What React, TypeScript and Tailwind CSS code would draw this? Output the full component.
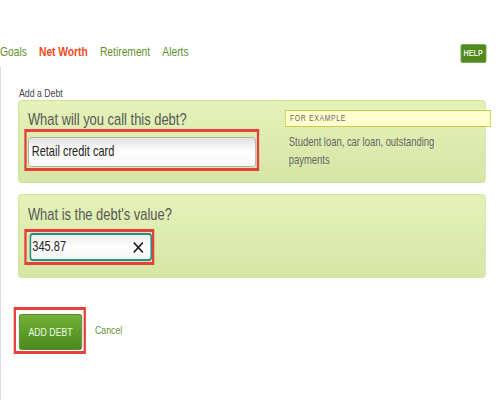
import React from 'react';

const navItems = [
  { label: 'Goals', active: false },
  { label: 'Net Worth', active: true },
  { label: 'Retirement', active: false },
  { label: 'Alerts', active: false },
];

export default function App() {
  return (
    <div className="w-[500px] h-[400px] overflow-hidden bg-white">
      {/* the page is drawn wide and squeezed horizontally, like the capture */}
      <div className="w-[658px] h-[400px] origin-top-left scale-x-[0.76] font-['Liberation_Sans',Arial,sans-serif] flex flex-col">
        {/* top nav */}
        <div className="flex items-start justify-between pt-[44px] pr-[18.5px]">
          <nav className="flex gap-4 text-[13.5px] leading-[16px]">
            {navItems.map((item) => (
              <span
                key={item.label}
                className={item.active ? 'font-bold text-[#f24a1c]' : 'text-[#5f8f2b]'}
              >
                {item.label}
              </span>
            ))}
          </nav>
          <div className="w-[34px] h-[19px] flex items-center justify-center rounded-[2px] bg-[#4e8a1d] border border-[#7aaa4a] text-[9.5px] font-bold text-[#e9f2dc]">
            HELP
          </div>
        </div>

        {/* content */}
        <div className="mt-[4px] flex-1 border-l border-[#cfcfcf] pl-[16.5px] pt-[19px]">
          <div className="pl-[7.5px] text-[11.5px] leading-[14px] text-[#444]">Add a Debt</div>

          {/* debt name */}
          <div className="ml-[6.2px] w-[615.8px] flex rounded-[4px] border border-[#c6df88] bg-linear-to-b from-[#e4f2b8] to-[#d6e6a5] pl-[7px] pt-[9px] pb-[11px]">
            <div className="w-[343.3px] shrink-0">
              <div className="pl-[5px] text-[17px] leading-[19px] text-[#585858]">What will you call this debt?</div>
              <div className="w-[309px] border-[3px] border-[#e6403d] pl-[2px] pr-px pt-[5.4px] pb-px">
                <div className="h-[29.3px] flex items-center rounded-[5px] border border-[#a9a9a9] bg-linear-to-b from-[#e2e2e2] via-white to-[#f7f7f7] pl-[4px] text-[14.5px] text-[#222]">
                  Retail credit card
                </div>
              </div>
            </div>
            <div className="w-[271px] shrink-0">
              <div className="h-[17px] flex items-center border border-[#c9c94c] bg-[#ffffce] pl-[5.5px] text-[9px] tracking-[0.9px] text-[#666]">
                FOR EXAMPLE
              </div>
              <p className="mt-[5.5px] pl-[5px] w-[235px] text-[12.4px] leading-[18px] text-[#656565]">
                Student loan, car loan, outstanding payments
              </p>
            </div>
          </div>

          {/* debt value */}
          <div className="ml-[6.2px] mt-[11.7px] w-[615.8px] rounded-[4px] border border-[#c6df88] bg-linear-to-b from-[#e4f2b8] to-[#d6e6a5] pl-[7px] pt-[10px] pb-[11.3px]">
            <div className="pl-[5px] text-[17px] leading-[19px] text-[#585858]">What is the debt's value?</div>
            <div className="mt-[4.2px] w-[171.4px] border-[3px] border-[#e6403d] pl-[3.9px] pt-[1.7px] pb-px">
              <div className="w-[161px] h-[28px] flex items-center justify-between rounded-[4px] border-2 border-[#2b8a8a] bg-linear-to-b from-[#ececec] via-white to-[#f5f5f5] pl-[2px] pr-[9px] text-[14.5px] text-[#222]">
                <span>345.87</span>
                <svg width="14" height="11" viewBox="0 0 14 11" fill="none" stroke="#1e1e1e" strokeWidth="1.8">
                  <path d="M1 0.5 L13 10.5 M13 0.5 L1 10.5" />
                </svg>
              </div>
            </div>
          </div>

          {/* actions */}
          <div className="mt-[29.7px] flex items-center gap-[11.8px]">
            <div className="w-[95.7px] border-[3px] border-[#e6403d] pl-[4.5px] pt-[4px] pb-px">
              <button className="w-[83px] h-[36px] rounded-[3px] border border-[#3d7518] bg-linear-to-b from-[#72b035] to-[#4b8a1e] text-[11.5px] text-[#f1f7e6]">
                ADD DEBT
              </button>
            </div>
            <span className="text-[11.5px] text-[#6b8f3a]">Cancel</span>
          </div>
        </div>
      </div>
    </div>
  );
}
